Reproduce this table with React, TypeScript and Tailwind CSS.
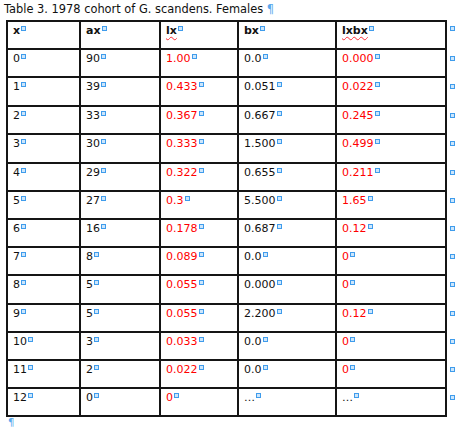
const FONT = "font-['DejaVu_Sans',sans-serif]";

type Row = {
  cells: string[];
  h: number;
};

const widths = ["w-[73px]", "w-[80px]", "w-[78px]", "w-[98px]", "w-[110px]"];
const redCols = [2, 4];

const rows: Row[] = [
  { cells: ["0", "90", "1.00", "0.0", "0.000"], h: 28 },
  { cells: ["1", "39", "0.433", "0.051", "0.022"], h: 29 },
  { cells: ["2", "33", "0.367", "0.667", "0.245"], h: 28 },
  { cells: ["3", "30", "0.333", "1.500", "0.499"], h: 29 },
  { cells: ["4", "29", "0.322", "0.655", "0.211"], h: 28 },
  { cells: ["5", "27", "0.3", "5.500", "1.65"], h: 28 },
  { cells: ["6", "16", "0.178", "0.687", "0.12"], h: 28 },
  { cells: ["7", "8", "0.089", "0.0", "0"], h: 28 },
  { cells: ["8", "5", "0.055", "0.000", "0"], h: 29 },
  { cells: ["9", "5", "0.055", "2.200", "0.12"], h: 28 },
  { cells: ["10", "3", "0.033", "0.0", "0"], h: 28 },
  { cells: ["11", "2", "0.022", "0.0", "0"], h: 28 },
  { cells: ["12", "0", "0", "…", "…"], h: 28 },
];

const heights: Record<number, string> = {
  28: "h-[28px]",
  29: "h-[29px]",
};

const Mark = () => (
  <span className="ml-[1px] inline-block h-[5px] w-[5px] translate-y-[-3px] border border-[#3f9cec] bg-[#cde6fb] align-middle" />
);

const App = () => {
  return (
    <div className={`h-[428px] w-[460px] overflow-hidden bg-white text-[11px] leading-[13px] text-[#111] ${FONT}`}>
      <div className="pl-[4px] pt-[3px] text-[11.4px]">
        Table 3. 1978 cohort of G. scandens. Females{" "}
        <span className="text-[#5aa9ee]">¶</span>
      </div>

      <div className="ml-[6px] mt-[4px]">
        <div className="flex">
          <div className="flex h-[30px] border-l-2 border-t-2 border-[#151515]">
            {["x", "ax", "lx", "bx", "lxbx"].map((label, i) => (
              <div
                key={label}
                className={`${widths[i]} border-b-2 border-r-2 border-[#151515] pl-[5px] pt-[2px] font-bold`}
              >
                <span
                  className={
                    label === "lx" || label === "lxbx"
                      ? "underline decoration-red-500 decoration-wavy decoration-1 underline-offset-2"
                      : ""
                  }
                >
                  {label}
                </span>
                <Mark />
              </div>
            ))}
          </div>
          <div className="pl-[2px] pt-[4px]">
            <Mark />
          </div>
        </div>

        {rows.map((row, r) => (
          <div key={r} className="flex">
            <div className={`flex ${heights[row.h]} border-l-2 border-[#151515]`}>
              {row.cells.map((c, i) => (
                <div
                  key={i}
                  className={`${widths[i]} border-b-2 border-r-2 border-[#151515] pl-[5px] pt-[2px] ${
                    redCols.includes(i) && c !== "…" ? "text-[#ff0000]" : ""
                  }`}
                >
                  {c}
                  <Mark />
                </div>
              ))}
            </div>
            <div className="pl-[2px] pt-[4px]">
              <Mark />
            </div>
          </div>
        ))}
      </div>

      <div className="pl-[8px] pt-[1px] text-[10px] leading-[10px] text-[#5aa9ee]">¶</div>
    </div>
  );
};

export default App;
